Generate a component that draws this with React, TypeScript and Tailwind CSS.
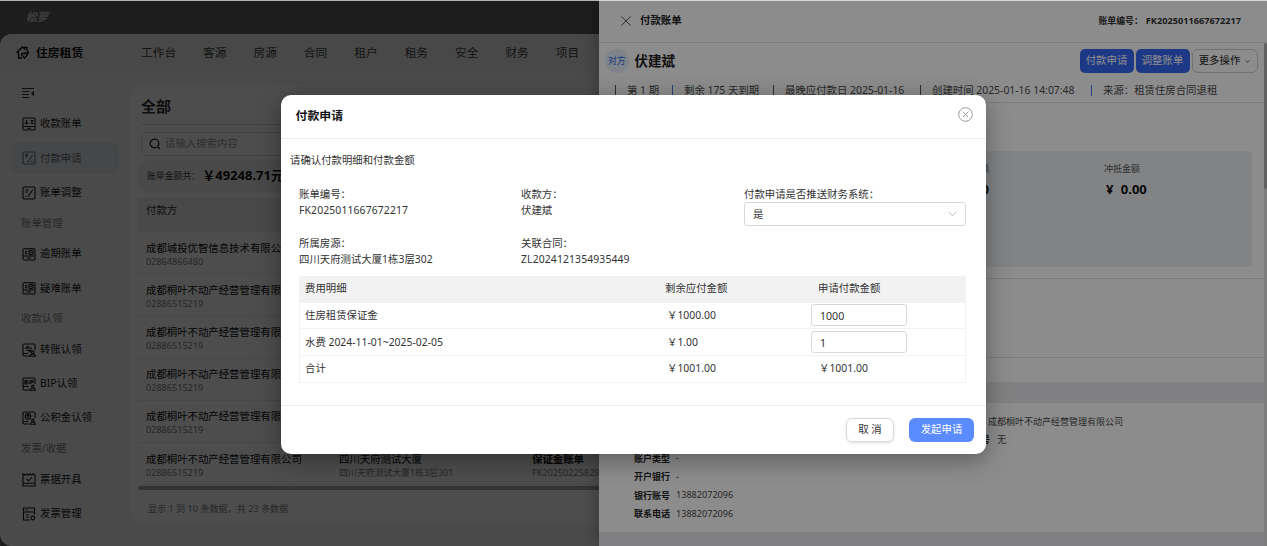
import { type ReactNode, useState } from "react";

const navItems = ["工作台", "客源", "房源", "合同", "租户", "租务", "安全", "财务", "项目"];

// small line drawings for the side menu, all on a 14x14 grid
const icons: Record<string, ReactNode> = {
  receive: (
    <>
      <rect x="1" y="1" width="12" height="12" rx="1" />
      <path d="M1 9.5h12M4.5 3v4M2.8 5.4l1.7 1.7 1.7-1.7M8.5 3.5h3M8.5 6.5h3M10 3v4M5 11.3h4" />
    </>
  ),
  pay: (
    <>
      <rect x="1" y="1" width="12" height="12" rx="1.2" />
      <path d="M4.6 7V3.2M3 4.6l1.6-1.5 1.6 1.5M5.8 11l4.8-7M8.5 10.5h2.5" />
    </>
  ),
  adjust: (
    <>
      <rect x="1" y="1" width="12" height="12" rx="1.2" />
      <path d="M3.2 4h3.6M3.2 6h3M6 10.8l4.8-7.3M3.3 10.5h1" />
    </>
  ),
  overdue: (
    <>
      <path d="M1 9V2.5L2.5 1.3 4 2.2l1.5-.9L7 2.2l1.5-.9 1.5.9 1.5-.9L13 2.5V9" />
      <rect x="1" y="9" width="12" height="4" rx="1" />
      <circle cx="9" cy="5.6" r="2.2" />
      <path d="M3 4.6h2.2M3 6.6h2.2M9 4.5v1.3h.9M5 11h4" />
    </>
  ),
  transfer: (
    <>
      <path d="M8 13H2a1 1 0 0 1-1-1V2a1 1 0 0 1 1-1h10a1 1 0 0 1 1 1v5" />
      <path d="M6.5 3L4 5h6M4.5 7.4H9L7 9.4M1 10.5h5" />
      <circle cx="10.8" cy="9.2" r="1.3" />
      <path d="M8.2 13.2c.2-1.600 1.200-2.200 2.600-2.200s2.400.6 2.600 2.200z" />
    </>
  ),
  bip: (
    <>
      <path d="M8 13H2a1 1 0 0 1-1-1V2a1 1 0 0 1 1-1h10a1 1 0 0 1 1 1v5" />
      <path d="M3 3.500h2v3.500H3zM3 5.200h2M7 3.500V7M9 7V3.500h2v2H9M1 9.500h6" />
      <circle cx="10.800" cy="9.300" r="1.200" />
      <path d="M8.200 13.200c.2-1.500 1.200-2.200 2.600-2.200s2.400.7 2.600 2.200z" />
    </>
  ),
  fund: (
    <>
      <path d="M7 13H2a1 1 0 0 1-1-1V2a1 1 0 0 1 1-1h10a1 1 0 0 1 1 1v5" />
      <circle cx="6" cy="5.300" r="2.800" />
      <path d="M4.300 5.300L6 3.700l1.700 1.600M6 4v3M1 10.500h5" />
      <circle cx="10.800" cy="9.300" r="1.200" />
      <path d="M8.200 13.200c.2-1.500 1.200-2.200 2.600-2.200s2.400.7 2.600 2.200z" />
    </>
  ),
  receipt: (
    <>
      <path d="M1 13V1l1.700 1L4.400 1l1.700 1L7.800 1l1.700 1L11.200 1 13 2v11zM1 10.300h12" />
      <path d="M4.500 5.800l2 2 3.300-3.400" />
    </>
  ),
  invoice: (
    <>
      <path d="M7.500 13H1.500V1h11v6.500M1.500 5h11M4 3h1.500M4 8h3M4 10.300h2.500" />
      <circle cx="10.800" cy="11" r="1.900" />
    </>
  ),
};

type MenuEntry = { text: string; icon?: string; active?: boolean };

const menu: MenuEntry[] = [
  { text: "收款账单", icon: "receive" },
  { text: "付款申请", icon: "pay", active: true },
  { text: "账单调整", icon: "adjust" },
  { text: "账单管理" },
  { text: "逾期账单", icon: "overdue" },
  { text: "疑难账单", icon: "overdue" },
  { text: "收款认领" },
  { text: "转账认领", icon: "transfer" },
  { text: "BIP认领", icon: "bip" },
  { text: "公积金认领", icon: "fund" },
  { text: "发票/收据" },
  { text: "票据开具", icon: "receipt" },
  { text: "发票管理", icon: "invoice" },
];

const payers = [
  { name: "成都城投优智信息技术有限公司", phone: "02864866480" },
  { name: "成都桐叶不动产经营管理有限公司", phone: "02886515219" },
  { name: "成都桐叶不动产经营管理有限公司", phone: "02886515219" },
  { name: "成都桐叶不动产经营管理有限公司", phone: "02886515219" },
  { name: "成都桐叶不动产经营管理有限公司", phone: "02886515219" },
  { name: "成都桐叶不动产经营管理有限公司", phone: "02886515219" },
];

function MenuIcon({ name }: { name: string }) {
  return (
    <svg
      viewBox="0 0 14 14"
      className="size-[14px] shrink-0"
      fill="none"
      stroke="currentColor"
      strokeWidth="1.1"
    >
      {icons[name]}
    </svg>
  );
}

function SideMenu() {
  return (
    <aside className="w-[130px] shrink-0 pl-3 pt-[15px]">
      <svg
        viewBox="0 0 13 12"
        className="ml-[10px] block h-3 w-[13px] text-[#333]"
        fill="none"
        stroke="currentColor"
      >
        <path d="M0 1.500h12M0 4.500h7M0 7.500h7M0 10.500h7" />
        <path d="M12 3.500v6L9 6.500z" fill="currentColor" stroke="none" />
      </svg>
      <div className="mt-[8px]">
        {menu.map((item) =>
          item.icon ? (
            <div key={item.text} className="flex h-[34.300px] items-center">
              <div
                className={`flex h-8 w-[107px] items-center gap-[4.500px] rounded-md pl-[9.500px] text-[10.400px] ${
                  item.active ? "bg-[#eaecef] text-[#6a6e76]" : "text-[#1a1a1a]"
                }`}
              >
                <MenuIcon name={item.icon} />
                {item.text}
              </div>
            </div>
          ) : (
            <div
              key={item.text}
              className="flex h-[27px] items-center pl-[9px] text-[10.400px] text-[#83868c]"
            >
              {item.text}
            </div>
          ),
        )}
      </div>
    </aside>
  );
}

function BillList() {
  return (
    <section className="mt-3 flex h-[440px] flex-1 flex-col overflow-hidden rounded-[12px] bg-white">
      <div className="ml-[11px] flex h-[41px] items-center border-b border-[#e4e4e4] pt-1 text-[15px] font-bold text-[#333]">
        全部
      </div>
      <div className="ml-[11px] mt-[7px] flex h-6 items-center gap-1 rounded-md border border-[#dcdfe6] pl-[7px] text-[10.400px] text-[#9b9ea5]">
        <svg
          viewBox="0 0 12 12"
          className="size-3 text-[#222]"
          fill="none"
          stroke="currentColor"
          strokeWidth="1.200"
        >
          <circle cx="5.500" cy="5.500" r="4.300" />
          <path d="M8.800 8.800l2.200 2.200" />
        </svg>
        请输入搜索内容
      </div>
      <div className="ml-2 mt-[4px] flex h-8 items-center rounded-[12px] bg-[#f3f4f6] pl-[9px] text-[8.900px] text-[#444]">
        账单金额共：
        <span className="ml-[2px] text-[13px] font-bold text-[#111]">￥49248.71元</span>
      </div>
      <div className="ml-2 mt-1.5 flex h-[34px] shrink-0 items-center bg-[#f3f4f6] pb-2 pl-2 text-[10.400px] text-[#333]">
        付款方
      </div>
      {payers.map((payer, i) => (
        <div
          key={i}
          className="ml-2 flex h-[42.200px] shrink-0 items-center border-b border-[#ededed] pl-2 pt-1 last-of-type:border-0"
        >
          <div className="w-[193px] shrink-0">
            <p className="whitespace-nowrap text-[10.400px] leading-[13px] text-[#111]">
              {payer.name}
            </p>
            <p className="text-[9.100px] leading-[13px] text-[#83868c]">{payer.phone}</p>
          </div>
          <div className="w-[193px] shrink-0">
            <p className="text-[10.400px] leading-[13px] text-[#111]">四川天府测试大厦</p>
            <p className="text-[8.900px] leading-[13px] text-[#83868c]">
              四川天府测试大厦1栋3层301
            </p>
          </div>
          <div className="w-[193px] shrink-0">
            <p className="text-[10.400px] font-bold leading-[13px] text-[#111]">保证金账单</p>
            <p className="text-[9.100px] leading-[13px] text-[#83868c]">FK2025022582951</p>
          </div>
        </div>
      ))}
      <div className="ml-2 mt-px h-1 shrink-0 rounded-full bg-[#a9a9a9]" />
      <div className="ml-[18px] mt-[11px] text-[9.100px] leading-4 text-[#83868c]">
        显示 1 到 10 条数据，共 23 条数据
      </div>
    </section>
  );
}

function Workspace() {
  return (
    <div className="flex h-full flex-col bg-[#636363]">
      <div className="flex h-[33.500px] shrink-0 items-center pl-[26px] text-[11px] font-black italic text-[#c5c5c5]">
        松萝
      </div>
      <div className="flex flex-1 flex-col overflow-hidden rounded-l-[12px] bg-[#f6f6f6]">
        <header className="flex h-[38.500px] shrink-0 items-center bg-[#eeeff0] pl-4">
          <svg
            viewBox="0 0 14 13"
            className="h-[13px] w-[14px] text-[#111]"
            fill="none"
            stroke="currentColor"
            strokeWidth="1.300"
          >
            <path d="M.6 6.500L6.500 1l2 1.800V1.500H11V5l2 2M2.500 6v6H6" />
            <path d="M8.500 12L5.800 9.300a1.500 1.500 0 0 1 2.500-1.600 1.600 1.600 0 0 1 2.800 1.500zM11.500 6.500v2" />
          </svg>
          <span className="ml-[6px] w-[105px] text-[11.800px] font-bold text-[#111]">住房租赁</span>
          <nav className="flex gap-[27px] whitespace-nowrap text-[11.700px] text-[#444]">
            {navItems.map((item) => (
              <span key={item}>{item}</span>
            ))}
          </nav>
        </header>
        <div className="flex flex-1">
          <SideMenu />
          <BillList />
        </div>
      </div>
    </div>
  );
}

function Bar({ blue }: { blue?: boolean }) {
  return <i className={`h-[11px] w-px ${blue ? "bg-[#4a7ae0]" : "bg-[#555]"}`} />;
}

const accountRows = [
  ["收款方", "伏建斌"],
  ["证件号码", "-"],
  ["账户类型", "-"],
  ["开户银行", "-"],
  ["银行账号", "13882072096"],
  ["联系电话", "13882072096"],
];

function BillDrawer() {
  return (
    <div className="flex h-full flex-col bg-[#e9eaed] text-[#222]">
      <div className="flex h-[43px] shrink-0 items-center border-b border-[#e2e3e5] bg-white pl-[21.500px] pr-[26px]">
        <svg viewBox="0 0 10 10" className="size-[10px] text-[#555]" stroke="currentColor">
          <path d="M.5.500l9 9M9.500.500l-9 9" />
        </svg>
        <span className="ml-[9.500px] text-[10.400px] font-bold">付款账单</span>
        <span className="ml-auto text-[9.200px] font-bold text-[#333]">
          <span className="mr-[3px] text-[8.900px]">账单编号：</span>
          FK2025011667672217
        </span>
      </div>
      <div className="flex flex-1">
        <div className="flex w-[665px] shrink-0 flex-col">
          <div className="bg-white">
            <div className="flex h-9 items-center pl-[6px] pr-[6.500px]">
              <span className="flex size-[23.500px] items-center justify-center rounded-full bg-[#e8effc] text-[8.900px] text-[#2f66e0]">
                对方
              </span>
              <span className="ml-[6px] text-[13.500px] font-bold">伏建斌</span>
              <div className="ml-auto flex gap-[2px] text-[10.400px]">
                <button className="h-[23.500px] w-[54px] rounded-[5px] bg-[#3568f5] text-white">
                  付款申请
                </button>
                <button className="h-[23.500px] w-[54px] rounded-[5px] bg-[#3568f5] text-white">
                  调整账单
                </button>
                <button className="flex h-[23.500px] w-[66px] items-center justify-center gap-[5px] rounded-[6px] border border-[#d0d0d0]">
                  更多操作
                  <svg viewBox="0 0 6 4" className="h-[3px] w-[5px]" fill="none" stroke="currentColor">
                    <path d="M.5.500L3 3 5.500.500" />
                  </svg>
                </button>
              </div>
            </div>
            <div className="flex h-6 items-center gap-[11.500px] whitespace-nowrap border-b border-[#e2e3e5] pl-[15.500px] text-[10.400px] text-[#4a4a4a]">
              <Bar />
              <span className="w-[33px]">第 1 期</span>
              <Bar blue />
              <span className="w-[77px]">剩余 175 天到期</span>
              <Bar />
              <span className="w-[123px]">最晚应付款日 2025-01-16</span>
              <Bar />
              <span className="w-[147px]">创建时间 2025-01-16 14:07:48</span>
              <Bar blue />
              <span>来源：租赁住房合同退租</span>
            </div>
            <div className="mx-3 mt-12 flex h-[116px] rounded-sm bg-[#edeff2] pt-[11px]">
              <div className="w-[378px] pr-0 text-right">
                <p className="text-[9px] leading-[14px] text-[#555]">剩余应付金额</p>
                <p className="mt-[5px] text-[13px] font-bold leading-[16px] text-[#111]">¥ 1001.00</p>
              </div>
              <div className="ml-[115px]">
                <p className="text-[9px] leading-[14px] text-[#555]">冲抵金额</p>
                <p className="ml-[2px] mt-[5px] text-[13px] font-bold leading-[16px] text-[#111]">
                  <span className="mr-[4px]">¥</span> 0.00
                </p>
              </div>
            </div>
            <div className="mt-[11px] h-[80px] border-y border-[#dfe0e2]" />
            <div className="h-6" />
          </div>
          <div className="mt-[21px] flex h-[129px] bg-white pl-[35px] pt-[9px] text-[9px]">
            <div className="w-[304px]">
              {accountRows.map(([label, value]) => (
                <div key={label} className="flex h-[18.500px] items-center">
                  <span className="w-[42px] font-bold">{label}</span>
                  <span className="text-[9.100px] text-[#4a4a4a]">{value}</span>
                </div>
              ))}
            </div>
            <div className="text-[#4a4a4a]">
              <div className="flex h-[18.500px] items-center">
                <span className="w-[50px] font-bold text-[#222]">付款单位</span>
                成都桐叶不动产经营管理有限公司
              </div>
              <div className="flex h-[18.500px] items-center">
                <span className="mr-[7px] w-[52px] text-right font-bold text-[#222]">付款账号</span>
                无
              </div>
            </div>
          </div>
        </div>
        <div className="flex-1 bg-[#e4e4e6]">
          <div className="h-[146px] rounded-full bg-[#b0b0b0]" />
        </div>
      </div>
    </div>
  );
}

type FieldProps = { label: string; children: ReactNode };

function Field({ label, children }: FieldProps) {
  return (
    <div className="leading-[16px]">
      <p>{label}</p>
      {children}
    </div>
  );
}

function PaymentDialog() {
  const [deposit, setDeposit] = useState("1000");
  const [water, setWater] = useState("1");

  const rowClass =
    "grid h-[26.900px] grid-cols-[366px_1fr_154px] items-center border-x border-b border-[#f2f2f2] pl-[5px]";
  const inputClass =
    "h-[22px] w-[96px] rounded-[3px] border border-[#d9d9d9] px-[8px] pt-[2px] text-[10.600px] outline-none";

  return (
    <div className="flex h-[359px] w-[705px] flex-col rounded-[10px] bg-white text-[10.400px] text-[#333] shadow-[0_6px_24px_rgba(0,0,0,0.35)]">
      <div className="flex h-[44px] shrink-0 items-center justify-between border-b border-[#eee] pl-[14.500px] pr-[13px]">
        <h2 className="text-[11.900px] font-bold text-[#111]">付款申请</h2>
        <svg
          viewBox="0 0 15 15"
          className="mb-1 size-[15px] text-[#999]"
          fill="none"
          stroke="currentColor"
        >
          <circle cx="7.500" cy="7.500" r="6.800" />
          <path d="M4.700 4.700l5.600 5.600M10.300 4.700l-5.600 5.600" />
        </svg>
      </div>
      <p className="ml-[9px] mt-[13px] leading-[16px]">请确认付款明细和付款金额</p>
      <div className="ml-[18px] mr-5 mt-[18px] grid grid-cols-[222px_223px_222px]">
        <Field label="账单编号：">
          <p className="tracking-[0.120px]">FK2025011667672217</p>
        </Field>
        <Field label="收款方：">
          <p>伏建斌</p>
        </Field>
        <Field label="付款申请是否推送财务系统：">
          <div className="flex h-6 items-center justify-between rounded-[3px] border border-[#d9d9d9] px-[8px]">
            是
            <svg
              viewBox="0 0 9 6"
              className="h-[6px] w-[9px] text-[#bbb]"
              fill="none"
              stroke="currentColor"
            >
              <path d="M.8.800l3.700 4 3.700-4" />
            </svg>
          </div>
        </Field>
      </div>
      <div className="ml-[18px] mr-5 mt-[9px] grid grid-cols-[222px_223px_222px]">
        <Field label="所属房源：">
          <p>四川天府测试大厦1栋3层302</p>
        </Field>
        <Field label="关联合同：">
          <p className="tracking-[0.120px]">ZL2024121354935449</p>
        </Field>
      </div>
      <div className="ml-[18px] mr-5 mt-[9px]">
        <div className="grid h-[27px] grid-cols-[360px_1fr_148px] items-center bg-[#f2f2f2] pl-[6px]">
          <span>费用明细</span>
          <span>剩余应付金额</span>
          <span>申请付款金额</span>
        </div>
        <div className={rowClass}>
          <span>住房租赁保证金</span>
          <span className="-ml-[4px]">￥1000.00</span>
          <input
            className={inputClass}
            value={deposit}
            onChange={(e) => setDeposit(e.target.value)}
          />
        </div>
        <div className={rowClass}>
          <span>水费 2024-11-01~2025-02-05</span>
          <span className="-ml-[4px]">￥1.00</span>
          <input className={inputClass} value={water} onChange={(e) => setWater(e.target.value)} />
        </div>
        <div className={rowClass}>
          <span>合计</span>
          <span className="-ml-[4px]">￥1001.00</span>
          <span className="ml-[8px]">￥1001.00</span>
        </div>
      </div>
      <div className="mt-auto flex h-[48.500px] items-center justify-end gap-[15px] border-t border-[#eee] pr-3">
        <button className="h-6 w-[48px] rounded-[6px] border border-[#d9d9d9] shadow-sm">
          取 消
        </button>
        <button className="h-6 w-[65px] rounded-[6px] bg-[#5b8cff] text-white">发起申请</button>
      </div>
    </div>
  );
}

function App() {
  return (
    <div className="relative h-[546px] w-[1267px] overflow-hidden font-['Noto_Sans','Noto_Sans_CJK_SC',sans-serif]">
      <Workspace />
      <div className="absolute inset-0 bg-black/45" />
      <div className="absolute inset-y-0 right-0 w-[668px] shadow-[-4px_0_12px_rgba(0,0,0,0.2)]">
        <BillDrawer />
      </div>
      <div className="absolute inset-0 flex items-start justify-center bg-black/45 pt-[94.500px]">
        <PaymentDialog />
      </div>
      <div className="absolute inset-x-0 top-0 flex h-px">
        <div className="w-[599px] bg-[#b0b4b1]" />
        <div className="flex-1 bg-[#d5d9d6]" />
      </div>
    </div>
  );
}

export default App;
